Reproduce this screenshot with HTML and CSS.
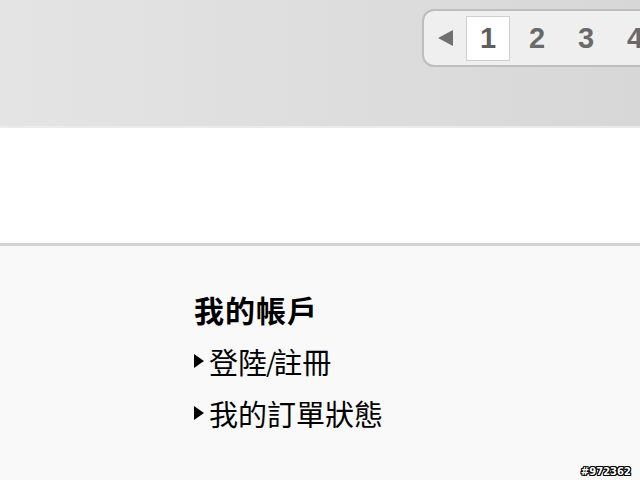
FILE: index.html
```html
<!DOCTYPE html>
<html lang="zh-Hant">
<head>
<meta charset="utf-8">
<link rel="stylesheet" href="styles.css">
</head>
<body>
<div class="page">
  <header class="header">
    <nav class="pager">
      <span class="prev"></span>
      <span class="num current">1</span>
      <span class="num">2</span>
      <span class="num">3</span>
      <span class="num">4</span>
    </nav>
  </header>
  <section class="blank"></section>
  <footer class="footer">
    <div class="title">我的帳戶</div>
    <div class="item"><span class="arrow"></span>登陸<span class="slash">/</span>註冊</div>
    <div class="item"><span class="arrow"></span>我的訂單狀態</div>
  </footer>
  <div class="mark">#972362</div>
</div>
</body>
</html>
```
FILE: styles.css
```css
html, body {
  margin: 0;
  padding: 0;
}
body {
  width: 640px;
  height: 480px;
  overflow: hidden;
  font-family: "Noto Sans CJK TC", "Noto Sans CJK SC", sans-serif;
  background: #f9f9f9;
}
.page {
  position: relative;
  width: 640px;
  height: 480px;
  display: flex;
  flex-direction: column;
}
.header {
  height: 128px;
  padding: 9px 0 0 422px;
  box-sizing: border-box;
  background: linear-gradient(to right, #e4e4e4, #d7d7d7);
  border-bottom: 2px solid #ebebeb;
  overflow: hidden;
  display: flex;
  align-items: flex-start;
  flex-shrink: 0;
}
.pager {
  display: flex;
  align-items: center;
  gap: 5px;
  height: 58px;
  box-sizing: border-box;
  padding-left: 14px;
  padding-right: 20px;
  border: 2px solid #bebebe;
  border-radius: 12px;
  background: #efefef;
  flex-shrink: 0;
}
.prev {
  width: 0;
  height: 0;
  border-right: 15px solid #707070;
  border-top: 8px solid transparent;
  border-bottom: 8px solid transparent;
  margin-right: 8px;
}
.num {
  width: 44px;
  height: 45px;
  box-sizing: border-box;
  display: flex;
  align-items: center;
  justify-content: center;
  font-family: "Liberation Sans", Arial, sans-serif;
  font-weight: bold;
  font-size: 29px;
  color: #6a6a6a;
  border: 1px solid transparent;
}
.num.current {
  background: #ffffff;
  border-color: #cfcfcf;
  color: #5e5e5e;
}
.blank {
  height: 115px;
  background: #ffffff;
  border-bottom: 3px solid #d3d3d3;
  flex-shrink: 0;
}
.footer {
  flex: 1;
  padding: 37px 0 0 194px;
  background: #f9f9f9;
  color: #000;
}
.title {
  font-size: 30px;
  font-weight: bold;
  line-height: 52px;
  letter-spacing: 1px;
}
.item {
  font-size: 29px;
  line-height: 52px;
  display: flex;
  align-items: center;
}
.arrow {
  width: 0;
  height: 0;
  border-left: 10px solid #000;
  border-top: 7px solid transparent;
  border-bottom: 7px solid transparent;
  margin-right: 5px;
}
.slash {
  margin: 0 -3px 0 -1px;
  font-size: 26px;
}
.mark {
  position: absolute;
  right: 9px;
  bottom: 3px;
  font-family: "DejaVu Sans", sans-serif;
  font-size: 10px;
  font-weight: bold;
  color: #fff;
  text-shadow: -1px 0 #000, 1px 0 #000, 0 -1px #000, 0 1px #000, 1px 1px #000, -1px -1px #000, 1px -1px #000, -1px 1px #000;
}
```
